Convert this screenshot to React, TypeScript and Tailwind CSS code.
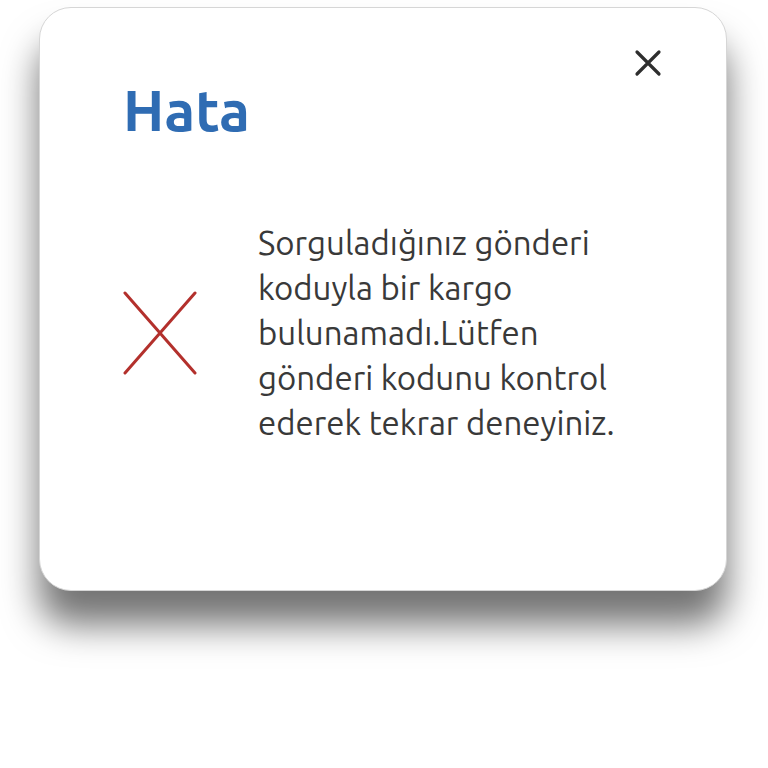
import React from "react";

export default function App() {
  return (
    <div className="w-[768px] h-[768px] bg-white pt-[7px] pl-[39px]">
      <div className="relative w-[688px] h-[584px] rounded-[32px] bg-white border border-[#d6d6d6] shadow-[0_34px_36px_rgba(0,0,0,0.55)] pl-[83px] pt-[70px] font-['Ubuntu','Noto_Sans',sans-serif]">
        <button className="absolute right-[64px] top-[41px] w-[28px] h-[28px] flex items-center justify-center">
          <svg width="28" height="28" viewBox="0 0 28 28">
            <path d="M3 3 L25 25 M25 3 L3 25" stroke="#2e2e2e" strokeWidth="3.2" strokeLinecap="round" />
          </svg>
        </button>
        <h1 className="text-[57px] leading-[64px] font-bold text-[#2f6cb3]">Hata</h1>
        <div className="flex items-center mt-[78px]">
          <div className="w-[135px] shrink-0">
            <svg width="74" height="84" viewBox="0 0 74 84">
              <path d="M2 2 L72 82 M72 2 L2 82" stroke="#b3302c" strokeWidth="3" strokeLinecap="round" />
            </svg>
          </div>
          <p className="text-[33px] leading-[45px] text-[#393939]">
            Sorguladığınız gönderi<br />
            koduyla bir kargo<br />
            bulunamadı.Lütfen<br />
            gönderi kodunu kontrol<br />
            ederek tekrar deneyiniz.
          </p>
        </div>
      </div>
    </div>
  );
}
